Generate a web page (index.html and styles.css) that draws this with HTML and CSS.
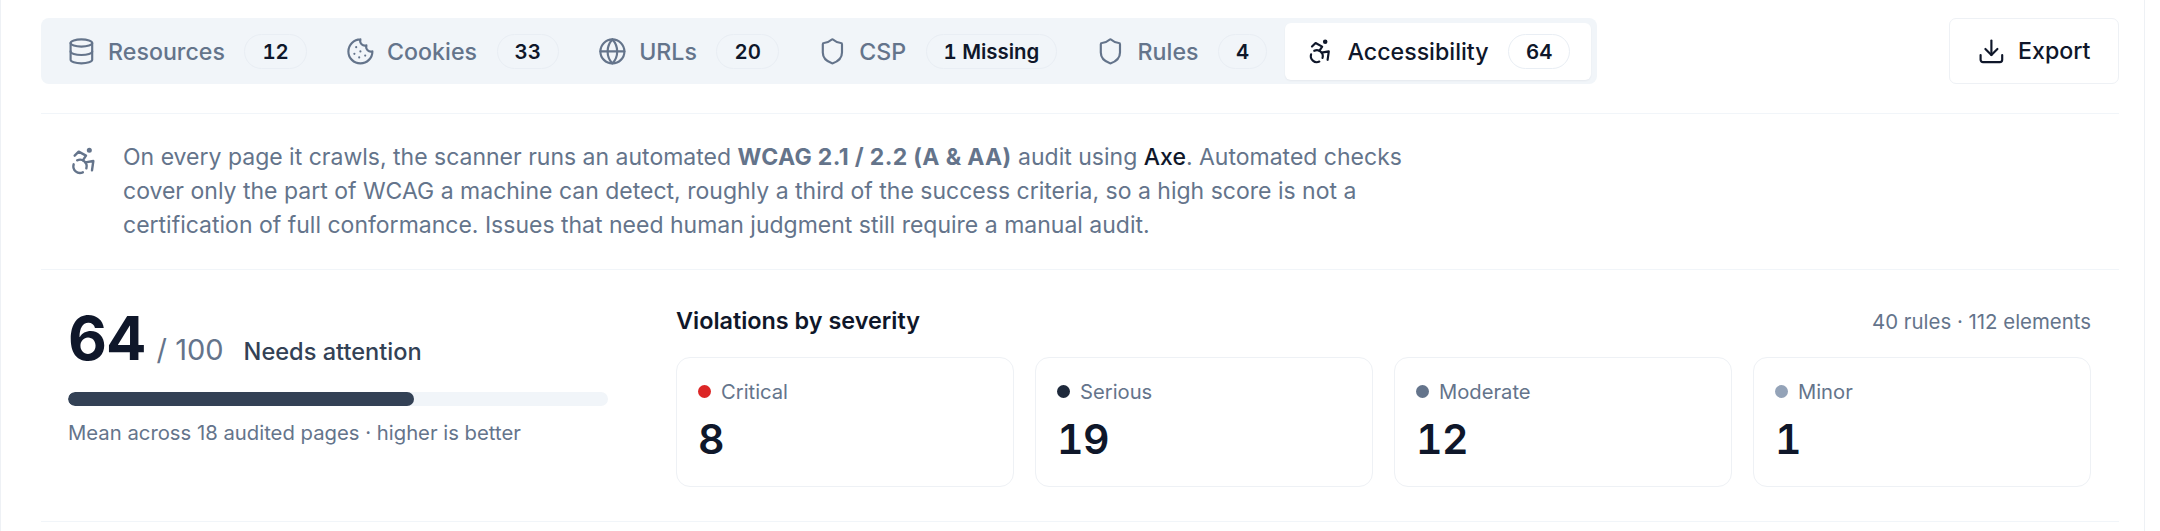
FILE: index.html
```html
<!DOCTYPE html>
<html lang="en">
<head>
<meta charset="utf-8">
<title>Accessibility audit</title>
<link rel="stylesheet" href="styles.css">
</head>
<body>
<main class="page">
  <header class="toolbar">
    <nav class="tabs">
      <a class="tab">
        <svg class="icon" viewBox="0 0 24 24"><ellipse cx="12" cy="5" rx="9" ry="3"/><path d="M3 5V19A9 3 0 0 0 21 19V5"/><path d="M3 12A9 3 0 0 0 21 12"/></svg>
        <span class="tab-label">Resources</span><span class="badge">12</span>
      </a>
      <a class="tab">
        <svg class="icon" viewBox="0 0 24 24"><path d="M12 2a10 10 0 1 0 10 10 4 4 0 0 1-5-5 4 4 0 0 1-5-5"/><path d="M8.5 8.5v.01"/><path d="M16 15.5v.01"/><path d="M12 12v.01"/><path d="M11 17v.01"/><path d="M7 14v.01"/></svg>
        <span class="tab-label">Cookies</span><span class="badge">33</span>
      </a>
      <a class="tab">
        <svg class="icon" viewBox="0 0 24 24"><circle cx="12" cy="12" r="10"/><path d="M12 2a14.5 14.5 0 0 0 0 20 14.5 14.5 0 0 0 0-20"/><path d="M2 12h20"/></svg>
        <span class="tab-label">URLs</span><span class="badge">20</span>
      </a>
      <a class="tab">
        <svg class="icon" viewBox="0 0 24 24"><path d="M20 13c0 5-3.5 7.5-7.66 8.95a1 1 0 0 1-.67-.01C7.5 20.5 4 18 4 13V6a1 1 0 0 1 1-1c2 0 4.5-1.2 6.24-2.72a1.17 1.17 0 0 1 1.52 0C14.51 3.81 17 5 19 5a1 1 0 0 1 1 1z"/></svg>
        <span class="tab-label">CSP</span><span class="badge">1 Missing</span>
      </a>
      <a class="tab">
        <svg class="icon" viewBox="0 0 24 24"><path d="M20 13c0 5-3.5 7.5-7.66 8.95a1 1 0 0 1-.67-.01C7.5 20.5 4 18 4 13V6a1 1 0 0 1 1-1c2 0 4.5-1.2 6.24-2.72a1.17 1.17 0 0 1 1.52 0C14.51 3.81 17 5 19 5a1 1 0 0 1 1 1z"/></svg>
        <span class="tab-label">Rules</span><span class="badge">4</span>
      </a>
      <a class="tab tab-active">
        <svg class="icon" viewBox="0 0 24 24"><circle cx="16" cy="4" r="1"/><path d="m18 19 1-7-6 1"/><path d="m5 8 3-3 5.5 3-2.36 3.5"/><path d="M4.24 14.5a5 5 0 0 0 6.88 6"/><path d="M13.76 17.5a5 5 0 0 0-6.88-6"/></svg>
        <span class="tab-label">Accessibility</span><span class="badge">64</span>
      </a>
    </nav>
    <button class="export">
      <svg class="icon" viewBox="0 0 24 24"><path d="M21 15v4a2 2 0 0 1-2 2H5a2 2 0 0 1-2-2v-4"/><polyline points="7 10 12 15 17 10"/><line x1="12" y1="15" x2="12" y2="3"/></svg>
      Export
    </button>
  </header>

  <section class="notice">
    <svg class="icon notice-icon" viewBox="0 0 24 24"><circle cx="16" cy="4" r="1"/><path d="m18 19 1-7-6 1"/><path d="m5 8 3-3 5.5 3-2.36 3.5"/><path d="M4.24 14.5a5 5 0 0 0 6.88 6"/><path d="M13.76 17.5a5 5 0 0 0-6.88-6"/></svg>
    <p class="notice-text">On every page it crawls, the scanner runs an automated <strong>WCAG 2.1 / 2.2 (A &amp; AA)</strong> audit using <a class="link">Axe</a>. Automated checks cover only the part of WCAG a machine can detect, roughly a third of the success criteria, so a high score is not a certification of full conformance. Issues that need human judgment still require a manual audit.</p>
  </section>

  <section class="summary">
    <div class="score">
      <div class="score-line">
        <span class="score-value">64</span>
        <span class="score-max">/ 100</span>
        <span class="score-status">Needs attention</span>
      </div>
      <div class="bar"><div class="bar-fill" style="width: 64%"></div></div>
      <p class="score-note">Mean across 18 audited pages · higher is better</p>
    </div>
    <div class="severity">
      <div class="severity-head">
        <h2 class="severity-title">Violations by severity</h2>
        <span class="severity-meta">40 rules · 112 elements</span>
      </div>
      <div class="cards">
        <div class="card"><div class="card-label"><i class="dot dot-critical"></i>Critical</div><div class="card-count">8</div></div>
        <div class="card"><div class="card-label"><i class="dot dot-serious"></i>Serious</div><div class="card-count">19</div></div>
        <div class="card"><div class="card-label"><i class="dot dot-moderate"></i>Moderate</div><div class="card-count">12</div></div>
        <div class="card"><div class="card-label"><i class="dot dot-minor"></i>Minor</div><div class="card-count">1</div></div>
      </div>
    </div>
  </section>
</main>
</body>
</html>
```
FILE: styles.css
```css
* { box-sizing: border-box; }
html, body { margin: 0; padding: 0; background: #fff; }
body {
  font-family: Inter, "Liberation Sans", sans-serif;
  color: #0f172a;
  height: 531px;
  overflow: hidden;
}
.page {
  width: 2145px;
  height: 531px;
  padding: 18px 25px 0 40px;
  border-left: 1px solid #eef1f5;
  border-right: 1px solid #eef1f5;
}
.icon {
  width: 28.8px;
  height: 28.8px;
  flex: none;
  fill: none;
  stroke: currentColor;
  stroke-width: 1.8;
  stroke-linecap: round;
  stroke-linejoin: round;
}
.toolbar {
  display: flex;
  justify-content: space-between;
  align-items: stretch;
  padding-bottom: 29px;
  border-bottom: 1px solid #f1f5f9;
}
.tabs {
  display: flex;
  height: 66px;
  padding: 5px 6px 4px 5px;
  background: #f1f5f9;
  border-radius: 8px;
}
.tab {
  display: flex;
  align-items: center;
  padding: 0 18.2px 0 21px;
  color: #64748b;
  font-size: 23.2px;
  font-weight: 500;
  border-radius: 6px;
}
.tab-active {
  padding-right: 21px;
  background: #fff;
  color: #0f172a;
  box-shadow: 0 1px 2px rgba(15, 23, 42, 0.05);
}
.tab-label { margin-left: 12.3px; }
.badge {
  display: flex;
  align-items: center;
  height: 35px;
  margin-left: 19.5px;
  padding: 0 17px;
  border: 1px solid #e9eef4;
  border-radius: 18px;
  color: #0f172a;
  font-size: 20.4px;
  font-weight: 600;
  font-variant-numeric: tabular-nums;
}
.export {
  display: flex;
  align-items: center;
  gap: 12px;
  height: 66px;
  padding: 0 27.5px;
  background: #fff;
  border: 1px solid #eef1f5;
  border-radius: 7px;
  color: #0f172a;
  font: 500 23.2px Inter, "Liberation Sans", sans-serif;
}
.notice {
  display: flex;
  gap: 23px;
  padding: 27px 0 26.6px 27px;
  border-bottom: 1px solid #f1f5f9;
  color: #64748b;
}
.notice-icon { width: 32px; height: 32px; margin-top: 4px; }
.notice-text {
  margin: 0;
  width: 1320px;
  font-size: 23px;
  line-height: 33.8px;
}
.notice-text strong { font-weight: 700; color: #64748b; letter-spacing: 0.35px; }
.link { color: #0f172a; font-weight: 500; }
.summary {
  display: flex;
  gap: 68px;
  padding: 32px 28px 34px 27px;
  border-bottom: 1px solid #f1f5f9;
}
.score { width: 540px; flex: none; }
.score-line {
  display: flex;
  align-items: baseline;
  height: 90px;
}
.score-value {
  font-size: 60px;
  font-weight: 700;
  line-height: 72px;
  letter-spacing: -1px;
}
.score-max {
  margin-left: 11px;
  font-size: 29px;
  color: #64748b;
}
.score-status {
  margin-left: 20px;
  font-size: 23.6px;
  font-weight: 500;
  color: #334155;
}
.bar {
  height: 14px;
  background: #f1f5f9;
  border-radius: 7px;
  overflow: hidden;
}
.bar-fill {
  height: 100%;
  background: #334155;
  border-radius: 7px;
}
.score-note {
  margin: 13px 0 0;
  font-size: 20.3px;
  line-height: 28px;
  color: #64748b;
}
.severity { flex: 1; min-width: 0; padding-top: 3px; }
.severity-head {
  display: flex;
  justify-content: space-between;
  align-items: center;
  height: 32px;
  margin-bottom: 20px;
}
.severity-title {
  margin: 0;
  font-size: 23.4px;
  font-weight: 600;
}
.severity-meta {
  margin-top: 2px;
  font-size: 20.4px;
  color: #64748b;
}
.cards {
  display: grid;
  grid-template-columns: repeat(4, 1fr);
  gap: 21px;
}
.card {
  height: 130px;
  padding: 19px 21px;
  border: 1px solid #eef1f5;
  border-radius: 14px;
}
.card-label {
  display: flex;
  align-items: center;
  gap: 10px;
  height: 30px;
  font-size: 20.2px;
  color: #64748b;
}
.dot {
  width: 13px;
  height: 13px;
  border-radius: 50%;
}
.dot-critical { background: #dc2626; }
.dot-serious { background: #1e293b; }
.dot-moderate { background: #64748b; }
.dot-minor { background: #94a3b8; }
.card-count {
  margin-top: 7px;
  font-size: 41px;
  font-weight: 600;
  line-height: 50px;
  letter-spacing: -0.5px;
  font-variant-numeric: tabular-nums;
}
```
